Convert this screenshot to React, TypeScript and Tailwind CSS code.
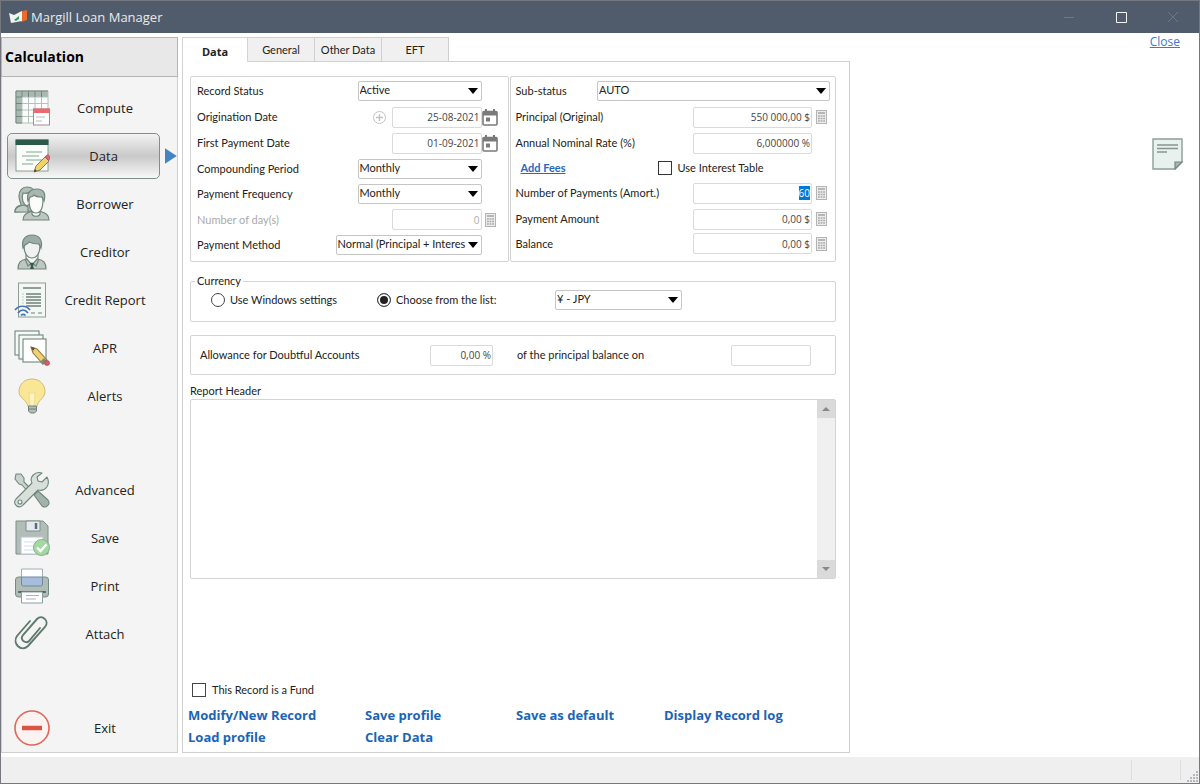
import { useEffect, useRef, useState } from "react";
import type { ReactNode } from "react";

const OUTLINE = "#6f877c";

function ComputeIcon() {
  return (
    <svg viewBox="0 0 36 36" className="h-9 w-9">
      <rect x="2" y="1" width="32" height="32" fill="#fbfdfc" />
      <path d="M2 1h32v6H8v26H2z" fill="#a9b8b0" />
      <path d="M2 1h32v32H2zM8 1v32M14.500 1v32M21 1v32M27.500 1v32M2 7h32M2 13.500h32M2 20h32M2 26.500h32" fill="none" stroke="#b3c2ba" />
      <path d="M2 1v32M2 1h32M8 1v6M14.500 1v6M21 1v6M27.500 1v6M2 7h6M2 13.500h6M2 20h6M2 26.500h6M2 33h6" fill="none" stroke={OUTLINE} />
      <rect x="19.500" y="19" width="16" height="16" fill="#fff" stroke="#a08e96" />
      <rect x="19" y="18.500" width="17" height="4.500" fill="#ea6a6f" />
      <path d="M22 27h9M22 31h6" stroke="#b7b9c6" />
    </svg>
  );
}

function DataIcon() {
  return (
    <svg viewBox="0 0 36 36" className="h-9 w-9">
      <rect x="2" y="2" width="32" height="31" fill="#fbfdfb" stroke="#8aa095" />
      <rect x="1.500" y="1.500" width="33" height="5.500" fill="#2c5a48" />
      <path d="M12 14h16M8 18h17M12 22h16M8 26h11" stroke="#a9c3b0" strokeWidth="1.300" />
      <path d="M20 34l2-6 9-9 4 4-9 9z" fill="#f1d36b" stroke="#8c7c45" />
      <path d="M31 19l2-2c1-1 4 2 3 3l-1.500 2.500z" fill="#dc6678" stroke="#994b5d" strokeWidth=".7" />
      <path d="M20 34l1-3 2 2z" fill="#444" />
    </svg>
  );
}

function BorrowerIcon() {
  return (
    <svg viewBox="0 0 36 36" className="h-9 w-9" stroke={OUTLINE} strokeWidth="1.200">
      <path d="M1 26c0-5 3-6 6-7 0-3-2-4-2-9 0-5 3-9 8-9s8 3 8 8v16z" fill="#b4beb9" />
      <path d="M1 26h13v-5l-4-2-4 1c-3 1-5 3-5 6z" fill="#c3cbc7" />
      <path d="M9 7c4 1 6 0 8-2v12l-4 3c-4-2-6-7-4-13z" fill="#f6f8f7" />
      <path d="M9 34c0-6 4-7 10-9h6c6 2 10 3 10 9z" fill="#bfc6c3" />
      <path d="M18 24v4c1 3 7 3 8 0v-4z" fill="#f6f8f7" />
      <path d="M15 13c0 10 3 14 7 14s7-4 7-14l-2-4H17z" fill="#fbfcfb" />
      <path d="M14 15c-2-7 2-12 9-12s9 5 7 12l-2-4c-4 0-7-1-8-2-1 2-3 2-4 2z" fill="#a9b5af" />
    </svg>
  );
}

function CreditorIcon() {
  return (
    <svg viewBox="0 0 36 36" className="h-9 w-9" stroke={OUTLINE} strokeWidth="1.200">
      <path d="M4 35c0-6 2-9 9-10h10c7 1 9 4 9 10z" fill="#bfc6c3" />
      <path d="M12 24l6 7 6-7v-4H12z" fill="#f6f8f7" />
      <path d="M11 25l3 7 4-3 4 3 3-7" fill="none" />
      <path d="M16 29h4l-1 3 1 3h-4l1-3z" fill="#2f5a49" stroke="none" />
      <path d="M10 12c0 8 4 12 8 12s8-4 8-12l-2-4H12z" fill="#f0f2f1" />
      <path d="M9 14C7 5 12 1 18 1c7 0 11 5 9 13l-2-4c-5 0-8-1-10-2-1 2-3 2-4 3z" fill="#9dada5" />
    </svg>
  );
}

function CreditReportIcon() {
  return (
    <svg viewBox="0 0 36 36" className="h-9 w-9">
      <rect x="4.500" y="1" width="27" height="34" fill="#f4f8f4" stroke="#8ba096" />
      <path d="M9 6h18M12 12h15M12 15h15M12 18h15M12 21h15M12 24h15" stroke="#6e8178" strokeWidth="1.300" />
      <path d="M8 12h2M8 15h2M8 18h2M8 21h2" stroke="#c3d3c8" />
      <path d="M17 31h4M24 31h4" stroke="#6e8178" />
      <g fill="none" stroke="#4572bd" strokeWidth="1.700">
        <path d="M1 28c4-5 11-5 15 0" />
        <path d="M4 31c3-4 7-4 10 0" />
        <path d="M7 33.500c1-1.500 3-1.500 4.500 0" />
      </g>
    </svg>
  );
}

function AprIcon() {
  return (
    <svg viewBox="0 0 36 36" className="h-9 w-9" stroke={OUTLINE} strokeWidth="1.100">
      <rect x="1" y="1" width="24" height="24" fill="#f7f9f8" />
      <rect x="5" y="5" width="24" height="24" fill="#f7f9f8" />
      <rect x="9" y="9" width="23" height="23" fill="#fdfefd" />
      <path d="M17 17l6 2 10 11-4 4-10-11z" fill="#f3cf70" stroke="#8c7c45" />
      <path d="M17 17l4 1-2 3z" fill="#5e4b40" stroke="none" />
      <path d="M30 28l3 3-4 4-3-3z" fill="#7a8b7d" stroke="none" />
      <circle cx="33" cy="33" r="2.500" fill="#dd5a62" stroke="#a04050" strokeWidth=".6" />
    </svg>
  );
}

function AlertsIcon() {
  return (
    <svg viewBox="0 0 36 36" className="h-9 w-9">
      <path d="M18 1c8 0 13 6 13 12.500 0 7-7 8-8 15h-9c-1-7-9-8-9-15C5 7 10 1 18 1z" fill="#fae795" stroke="#cdbc78" />
      <path d="M16 28l-1-14 3 2 3-2-1 14" fill="#fdf4c4" stroke="#f0dd92" />
      <path d="M14.500 28h8v5l-2 2h-4l-2-2z" fill="#b4bab8" stroke="#718078" />
      <path d="M15 31h7" stroke="#718078" />
    </svg>
  );
}

function AdvancedIcon() {
  return (
    <svg viewBox="0 0 36 36" className="h-9 w-9" stroke={OUTLINE} strokeWidth="1.100" strokeLinejoin="round">
      <path d="M2 2l5 0 3 4 0 4 9 9-3 3-8-9-3-1-4-5z" fill="#c9d3cc" />
      <path d="M20 23l4-4 10 9c3 4-2 9-6 6z" fill="#a3b2aa" />
      <path d="M33 5l-5 5-4-1-1-4 5-4c-7-2-13 4-10 10L2 27c-4 5 3 11 7 6l15-15c7 2 13-5 9-13z" fill="#d8e0d9" />
      <circle cx="6" cy="30" r="2" fill="#f4f6f4" />
    </svg>
  );
}

function SaveIcon() {
  return (
    <svg viewBox="0 0 36 36" className="h-9 w-9">
      <path d="M2 1h27l5 5v28H2z" fill="#b3bdb8" stroke="#7c9086" />
      <path d="M12 1h14v10H12z" fill="#e6e9ef" stroke="#7c9086" />
      <path d="M22 3v6" stroke="#5d6a78" strokeWidth="2.500" />
      <path d="M7 17h22v17H7z" fill="#fff" stroke="#b7c5d0" />
      <path d="M10 22h16M10 26h13M10 30h10" stroke="#cfdcec" />
      <circle cx="27.500" cy="27.500" r="8" fill="#a4d8a3" stroke="#7fb588" />
      <path d="M23 27.500l3.500 3.500 6-6.500" fill="none" stroke="#fff" strokeWidth="2.400" />
    </svg>
  );
}

function PrintIcon() {
  return (
    <svg viewBox="0 0 36 36" className="h-9 w-9">
      <rect x="1.500" y="9" width="33" height="20" rx="3" fill="#b2bcb6" stroke="#758b80" />
      <path d="M7.500 1h21v9h-21z" fill="#fff" stroke="#9fb0b4" />
      <path d="M7.500 9h21v7q0 2-2 2h-17q-2 0-2-2z" fill="#a6bedc" stroke="#6d8a9c" />
      <path d="M5 24h26" stroke="#52695e" strokeWidth="2" strokeLinecap="round" />
      <path d="M7.500 24h21v11h-21z" fill="#fff" stroke="#8b9fa0" />
      <path d="M12 27.500h13M12 31h10" stroke="#a9b0c6" />
    </svg>
  );
}

function AttachIcon() {
  return (
    <svg viewBox="0 0 36 36" className="h-9 w-9" fill="none" stroke="#5f7a6e" strokeWidth="1.900" strokeLinecap="round">
      <path d="M16 5L3 20c-5 7 4 17 11 10l17-19c5-6-3-13-8-8L9 19c-4 5 3 9 6 6l11-13" />
    </svg>
  );
}

function ExitIcon() {
  return (
    <svg viewBox="0 0 36 36" className="h-9 w-9">
      <circle cx="18" cy="18" r="17" fill="#fbf3f2" stroke="#e0685a" strokeWidth="1.600" />
      <path d="M8 18h20" stroke="#dc5342" strokeWidth="4.500" />
    </svg>
  );
}

function NoteIcon() {
  return (
    <svg viewBox="0 0 32 32" className="h-8 w-8">
      <path d="M1 1h29v23l-7 7H1z" fill="#e9f1ee" stroke="#8d9f97" strokeWidth="1.400" />
      <path d="M23 31v-7h7z" fill="#a8b6af" stroke="#75887f" strokeWidth="1.200" />
      <path d="M5 7h21M5 10.500h21M5 14h10" stroke="#86958f" strokeWidth="1.500" />
    </svg>
  );
}

function CalendarIcon() {
  return (
    <svg viewBox="0 0 16 17" className="h-[17px] w-4">
      <path d="M4 0v3M12 0v3" stroke="#7a7a7a" strokeWidth="2" />
      <rect x="1" y="2.500" width="14" height="13.500" rx="1" fill="#fff" stroke="#7a7a7a" strokeWidth="1.600" />
      <path d="M1 2.500h14v4H1z" fill="#7a7a7a" />
      <rect x="4" y="8.500" width="4" height="4" fill="#7a7a7a" />
    </svg>
  );
}

function CalculatorIcon() {
  return (
    <svg viewBox="0 0 11 14" className="h-[14px] w-[11px]">
      <rect x=".5" y=".5" width="10" height="13" fill="#ececec" stroke="#b4b4b4" />
      <path d="M2 3h7" stroke="#b0b0b0" strokeWidth="1.800" />
      <path d="M2 6h7M2 8.500h7M2 11h7" stroke="#aaa" strokeWidth="1.500" strokeDasharray="1.800 .8" />
    </svg>
  );
}

const MAIN_ITEMS = [
  { name: "Compute", icon: <ComputeIcon /> },
  { name: "Data", icon: <DataIcon /> },
  { name: "Borrower", icon: <BorrowerIcon /> },
  { name: "Creditor", icon: <CreditorIcon /> },
  { name: "Credit Report", icon: <CreditReportIcon /> },
  { name: "APR", icon: <AprIcon /> },
  { name: "Alerts", icon: <AlertsIcon /> },
];

const TOOL_ITEMS = [
  { name: "Advanced", icon: <AdvancedIcon /> },
  { name: "Save", icon: <SaveIcon /> },
  { name: "Print", icon: <PrintIcon /> },
  { name: "Attach", icon: <AttachIcon /> },
];

const TABS = ["Data", "General", "Other Data", "EFT"];

const ACTIONS = [
  "Modify/New Record",
  "Save profile",
  "Save as default",
  "Display Record log",
  "Load profile",
  "Clear Data",
];

interface SideButtonProps {
  name: string;
  icon: ReactNode;
  active?: boolean;
  onClick?: () => void;
}

function SideButton({ name, icon, active = false, onClick }: SideButtonProps) {
  return (
    <li className="flex h-12 items-center">
      <button
        type="button"
        onClick={onClick}
        className={
          active
            ? "flex h-[46px] w-[156px] items-center rounded-[5px] border border-[#7f8f8b] bg-linear-to-b from-[#f3f3f3] via-[#c9c9c9] to-[#f8f8f8] pl-[6px]"
            : "flex h-[46px] w-[156px] items-center rounded-[5px] border border-transparent pl-[6px]"
        }
      >
        {icon}
        <span className="flex-1 pr-[2px] text-center font-['Open_Sans','Noto_Sans',sans-serif] text-[13px]">{name}</span>
      </button>
      {active && (
        <svg viewBox="0 0 12 16" className="ml-[5px] h-4 w-3">
          <path d="M0 0l12 8-12 8z" fill="#4285c5" />
        </svg>
      )}
    </li>
  );
}

interface SelectBoxProps {
  id: string;
  value: string;
  width: string;
  label?: string;
}

function SelectBox({ id, value, width, label }: SelectBoxProps) {
  return (
    <span className={`relative block ${width}`}>
      <select
        id={id}
        aria-label={label}
        defaultValue={value}
        className="block h-5 w-full appearance-none rounded-xs border border-[#c6c6c6] bg-white pb-[2px] pl-px text-[11px] leading-4 text-[#222] outline-none"
      >
        <option>{value}</option>
      </select>
      <svg viewBox="0 0 10 6" className="pointer-events-none absolute top-[7px] right-1 h-[6px] w-[10px]">
        <path d="M0 0h10L5 6z" fill="#000" />
      </svg>
    </span>
  );
}

interface TextBoxProps {
  id: string;
  value: string;
  width: string;
  disabled?: boolean;
  selected?: boolean;
}

function TextBox({ id, value, width, disabled = false, selected = false }: TextBoxProps) {
  const ref = useRef<HTMLInputElement>(null);

  useEffect(() => {
    if (selected) {
      ref.current?.focus();
      ref.current?.select();
    }
  }, [selected]);

  return (
    <input
      ref={ref}
      id={id}
      type="text"
      defaultValue={value}
      disabled={disabled}
      className={`h-[21px] rounded-xs border border-[#dadada] bg-white pr-px text-right font-['Open_Sans','Noto_Sans',sans-serif] text-[10px] text-[#444] outline-none selection:bg-[#0078d7] selection:text-white disabled:text-[#aaa] ${width}`}
    />
  );
}

interface FieldProps {
  id: string;
  label: string;
  children: ReactNode;
  trailing?: ReactNode;
  muted?: boolean;
  slot: string;
}

function Field({ id, label, children, trailing, muted = false, slot }: FieldProps) {
  return (
    <div className="flex items-center">
      <label htmlFor={id} className={muted ? "text-[#aaa]" : ""}>
        {label}
      </label>
      <div className="ml-auto flex items-center">{children}</div>
      <div className={`flex shrink-0 ${slot}`}>{trailing}</div>
    </div>
  );
}

function IconButton({ label, children }: { label: string; children: ReactNode }) {
  return (
    <button type="button" aria-label={label}>
      {children}
    </button>
  );
}

const LEFT_SLOT = "w-[17px]";
const CALC_SLOT = "w-[18px] pl-1";

function LoanTerms() {
  return (
    <div className="grid grid-rows-[26px_26px_26px_25px_26px_25px_26px] rounded-xs border border-[#d4d4d4] pt-px pr-[9px] pb-[3px] pl-[6px]">
      <Field id="status" label="Record Status" slot={LEFT_SLOT}>
        <SelectBox id="status" value="Active" width="w-[124px]" />
      </Field>
      <Field
        id="origination"
        label="Origination Date"
        slot={LEFT_SLOT}
        trailing={<IconButton label="Pick origination date"><CalendarIcon /></IconButton>}
      >
        <button type="button" aria-label="Add date" className="mr-[6px]">
          <svg viewBox="0 0 13 13" className="h-[13px] w-[13px]" fill="none" stroke="#c2c2c2">
            <circle cx="6.500" cy="6.500" r="6" />
            <path d="M3 6.500h7M6.500 3v7" strokeWidth="1.300" />
          </svg>
        </button>
        <TextBox id="origination" value="25-08-2021" width="w-[90px]" />
      </Field>
      <Field
        id="first-payment"
        label="First Payment Date"
        slot={LEFT_SLOT}
        trailing={<IconButton label="Pick first payment date"><CalendarIcon /></IconButton>}
      >
        <TextBox id="first-payment" value="01-09-2021" width="w-[90px]" />
      </Field>
      <Field id="compounding" label="Compounding Period" slot={LEFT_SLOT}>
        <SelectBox id="compounding" value="Monthly" width="w-[124px]" />
      </Field>
      <Field id="frequency" label="Payment Frequency" slot={LEFT_SLOT}>
        <SelectBox id="frequency" value="Monthly" width="w-[124px]" />
      </Field>
      <Field
        id="days"
        label="Number of day(s)"
        slot="w-[17px] pl-[3px]"
        muted
        trailing={<IconButton label="Calculate days"><CalculatorIcon /></IconButton>}
      >
        <TextBox id="days" value="0" width="w-[90px]" disabled />
      </Field>
      <Field id="method" label="Payment Method" slot={LEFT_SLOT}>
        <SelectBox id="method" value="Normal (Principal + Interes" width="w-[146px]" />
      </Field>
    </div>
  );
}

function LoanAmounts() {
  return (
    <div className="grid grid-rows-[26px_26px_26px_23px_28px_24px_25px] rounded-xs border border-[#d4d4d4] pt-px pr-[5px] pb-[3px] pl-[5px]">
      <Field id="sub-status" label="Sub-status" slot="w-0">
        <SelectBox id="sub-status" value="AUTO" width="w-[233px]" />
      </Field>
      <Field
        id="principal"
        label="Principal (Original)"
        slot={CALC_SLOT}
        trailing={<IconButton label="Calculate principal"><CalculatorIcon /></IconButton>}
      >
        <TextBox id="principal" value="550 000,00 $" width="w-[119px]" />
      </Field>
      <Field id="rate" label="Annual Nominal Rate (%)" slot={CALC_SLOT}>
        <TextBox id="rate" value="6,000000 %" width="w-[119px]" />
      </Field>
      <div className="flex items-center pl-[5px]">
        <a href="#fees" className="w-[137px] font-bold text-[#2668c5] underline">
          Add Fees
        </a>
        <input
          id="interest-table"
          type="checkbox"
          className="mr-[6px] h-[14px] w-[14px] appearance-none border border-[#333] bg-white checked:bg-[#333]"
        />
        <label htmlFor="interest-table">Use Interest Table</label>
      </div>
      <Field
        id="payments"
        label="Number of Payments (Amort.)"
        slot={CALC_SLOT}
        trailing={<IconButton label="Calculate number of payments"><CalculatorIcon /></IconButton>}
      >
        <TextBox id="payments" value="60" width="w-[119px]" selected />
      </Field>
      <Field
        id="amount"
        label="Payment Amount"
        slot={CALC_SLOT}
        trailing={<IconButton label="Calculate payment amount"><CalculatorIcon /></IconButton>}
      >
        <TextBox id="amount" value="0,00 $" width="w-[119px]" />
      </Field>
      <Field
        id="balance"
        label="Balance"
        slot={CALC_SLOT}
        trailing={<IconButton label="Calculate balance"><CalculatorIcon /></IconButton>}
      >
        <TextBox id="balance" value="0,00 $" width="w-[119px]" />
      </Field>
    </div>
  );
}

const RADIO =
  "mr-[5px] h-[14px] w-[14px] appearance-none rounded-full border border-[#444] bg-white checked:bg-[#222] checked:shadow-[inset_0_0_0_2px_#fff]";

function CurrencyGroup() {
  return (
    <fieldset className="mt-3 h-12 rounded-xs border border-[#d4d4d4] pl-5">
      <legend className="-ml-4 px-[2px] leading-[14px]">Currency</legend>
      <div className="flex h-6 items-center">
        <label className="flex w-[166px] items-center">
          <input type="radio" name="currency" className={RADIO} />
          Use Windows settings
        </label>
        <label className="flex w-[178px] items-center">
          <input type="radio" name="currency" defaultChecked className={RADIO} />
          Choose from the list:
        </label>
        <SelectBox id="currency" label="Currency" value="¥ - JPY" width="w-[127px]" />
      </div>
    </fieldset>
  );
}

export default function App() {
  const [page, setPage] = useState("Data");
  const [tab, setTab] = useState("Data");

  return (
    <div className="flex min-h-screen flex-col border border-[#75797f] bg-white font-[Lato,'Open_Sans',sans-serif] text-[11px] leading-4 text-[#222]">
      <header className="flex h-8 items-center bg-[#505c6b] pl-2 font-['Open_Sans','Noto_Sans',sans-serif] text-[13px] text-[#e8ebee]">
        <svg viewBox="0 0 18 14" className="mr-1 h-[14px] w-[18px]">
          <path d="M10 2l8-2v10l-6 2z" fill="#ee6a25" />
          <path d="M0 3l5 2 8-4v10l-11 2z" fill="#f2f4f3" />
          <path d="M5 10l5-4v3l-3 2z" fill="#399a63" />
        </svg>
        <h1>Margill Loan Manager</h1>
        <div className="ml-auto flex">
          <button type="button" aria-label="Minimize" className="flex h-8 w-[52px] items-center justify-center">
            <svg viewBox="0 0 10 10" className="h-[10px] w-[10px]"><path d="M0 5.500h10" stroke="#6c7784" /></svg>
          </button>
          <button type="button" aria-label="Maximize" className="flex h-8 w-[52px] items-center justify-center">
            <svg viewBox="0 0 11 11" className="h-[11px] w-[11px]"><path d="M.5.5h10v10H.5z" fill="none" stroke="#f3f4f5" /></svg>
          </button>
          <button type="button" aria-label="Close window" className="flex h-8 w-[52px] items-center justify-center">
            <svg viewBox="0 0 10 10" className="h-[10px] w-[10px]"><path d="M0 0l10 10M10 0L0 10" stroke="#6c7784" /></svg>
          </button>
        </div>
      </header>

      <div className="flex flex-1 gap-1 py-1">
        <nav className="flex w-[177px] shrink-0 flex-col border border-[#cfcfcf] bg-[#f4f4f4]">
          <h2 className="-m-px flex h-10 items-center border border-[#b5b5b5] bg-[#e8e8e8] pl-[3px] font-['Open_Sans','Noto_Sans',sans-serif] text-[14px] font-bold text-black">
            Calculation
          </h2>
          <ul className="mt-2 pl-[5px]">
            {MAIN_ITEMS.map((item) => (
              <SideButton
                key={item.name}
                name={item.name}
                icon={item.icon}
                active={page === item.name}
                onClick={() => setPage(item.name)}
              />
            ))}
          </ul>
          <ul className="mt-[46px] pl-[5px]">
            {TOOL_ITEMS.map((item) => (
              <SideButton key={item.name} name={item.name} icon={item.icon} />
            ))}
          </ul>
          <ul className="mt-auto pl-[5px]">
            <SideButton name="Exit" icon={<ExitIcon />} />
          </ul>
        </nav>

        <main className="flex flex-1 flex-col">
          <div role="tablist" className="flex h-[25px]">
            {TABS.map((name) => (
              <button
                key={name}
                type="button"
                role="tab"
                aria-selected={tab === name}
                onClick={() => setTab(name)}
                className={
                  tab === name
                    ? "w-[66px] border-t border-r border-l border-[#d4d4d4] bg-white pt-1 font-['Open_Sans','Noto_Sans',sans-serif] font-bold"
                    : "w-[67px] border-t border-r border-b border-[#d0d0d0] bg-[#f0f0f0]"
                }
              >
                {name}
              </button>
            ))}
            <div className="flex-1 border-b border-[#d0d0d0]" />
          </div>

          <div className="flex flex-1 flex-col border-r border-b border-l border-[#d0d0d0] pt-[14px] pr-[13px] pb-1 pl-[7px]">
            <div className="grid grid-cols-[319fr_327fr] gap-px">
              <LoanTerms />
              <LoanAmounts />
            </div>

            <CurrencyGroup />

            <div className="mt-[13px] flex h-10 items-center rounded-xs border border-[#d4d4d4] pr-6 pl-[9px]">
              <label htmlFor="allowance" className="w-[230px]">
                Allowance for Doubtful Accounts
              </label>
              <TextBox id="allowance" value="0,00 %" width="w-[63px]" />
              <label htmlFor="balance-date" className="ml-6">
                of the principal balance on
              </label>
              <input
                id="balance-date"
                type="text"
                className="ml-auto h-[21px] w-20 rounded-xs border border-[#dadada] bg-white text-[11px] outline-none"
              />
            </div>

            <label htmlFor="report-header" className="mt-2">
              Report Header
            </label>
            <div className="flex h-[180px] rounded-xs border border-[#d4d4d4]">
              <textarea id="report-header" className="flex-1 resize-none p-1 outline-none" />
              <div className="flex w-[18px] flex-col justify-between bg-[#f0f0f0]">
                <button type="button" aria-label="Scroll up" className="flex h-[18px] items-center justify-center bg-[#dadada]">
                  <svg viewBox="0 0 8 4" className="h-1 w-2"><path d="M0 4h8L4 0z" fill="#888" /></svg>
                </button>
                <button type="button" aria-label="Scroll down" className="flex h-[18px] items-center justify-center bg-[#dadada]">
                  <svg viewBox="0 0 8 4" className="h-1 w-2"><path d="M0 0h8L4 4z" fill="#888" /></svg>
                </button>
              </div>
            </div>

            <label className="mt-auto mb-[6px] flex items-center pl-[2px]">
              <input
                type="checkbox"
                className="mr-[6px] h-[14px] w-[14px] appearance-none border border-[#444] bg-white checked:bg-[#333]"
              />
              This Record is a Fund
            </label>
            <div className="-ml-[2px] grid grid-cols-[177fr_151fr_148fr_172fr] font-['Open_Sans','Noto_Sans',sans-serif] text-[13px] leading-[22px] font-bold text-[#1a65b5]">
              {ACTIONS.map((action) => (
                <a key={action} href="#action">
                  {action}
                </a>
              ))}
            </div>
          </div>
        </main>

        <aside className="flex w-[345px] shrink-0 flex-col items-end">
          <a href="#close" className="mt-[-3px] mr-[19px] font-['Open_Sans','Noto_Sans',sans-serif] text-[12px] text-[#4076cf] underline">
            Close
          </a>
          <button type="button" aria-label="Notes" className="mt-[88px] mr-[15px]">
            <NoteIcon />
          </button>
        </aside>
      </div>

      <footer className="flex h-[26px] justify-end bg-[#efefef]">
        <div className="my-[3px] w-[50px] border-r border-l border-[#dcdcdc]" />
        <div className="flex w-[18px] items-end justify-end">
          <svg viewBox="0 0 12 12" className="h-3 w-3" fill="#b4b6ba">
            <path d="M9 0h2v2H9zM6 3h2v2H6zM9 3h2v2H9zM3 6h2v2H3zM6 6h2v2H6zM9 6h2v2H9zM0 9h2v2H0zM3 9h2v2H3zM6 9h2v2H6zM9 9h2v2H9z" />
          </svg>
        </div>
      </footer>
    </div>
  );
}
